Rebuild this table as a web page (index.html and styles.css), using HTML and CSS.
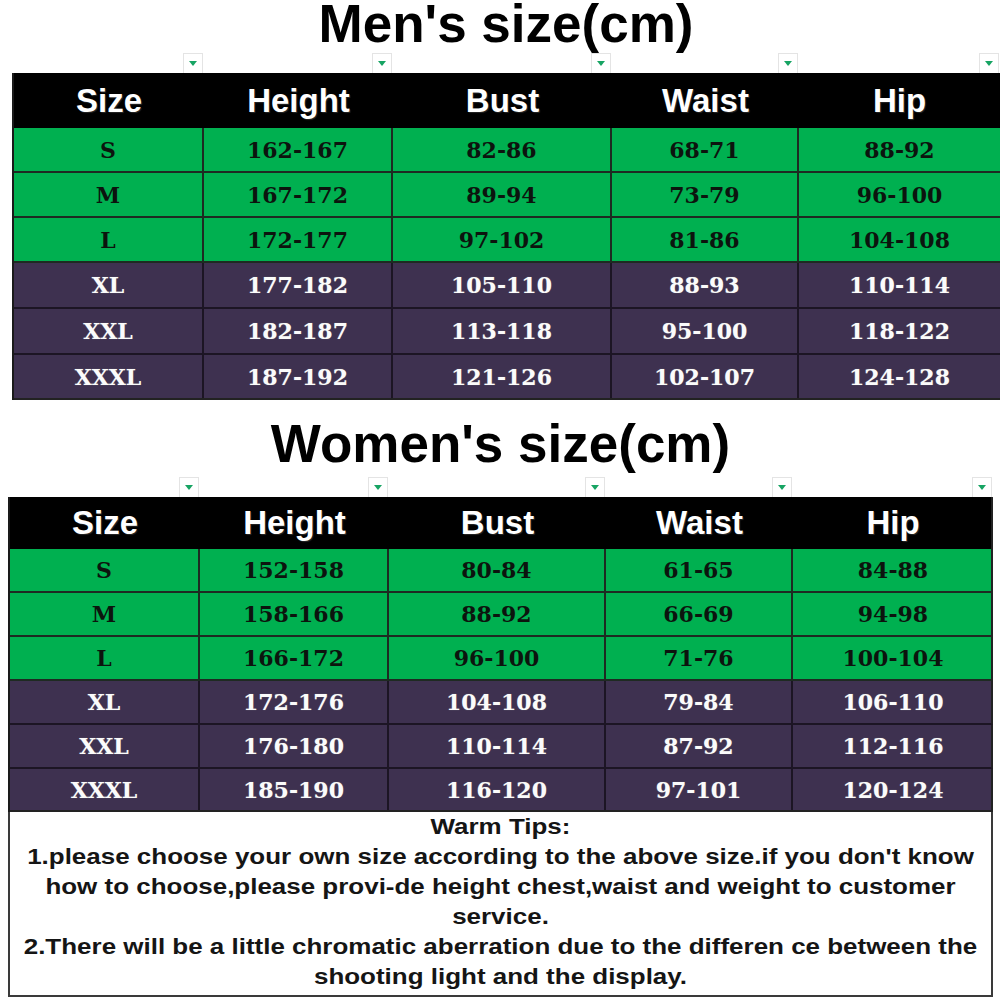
FILE: index.html
```html
<!DOCTYPE html>
<html>
<head>
<meta charset="utf-8">
<link rel="stylesheet" href="styles.css">
</head>
<body>
<div class="page">
  <section class="chart men">
    <h1 class="title">Men's size(cm)</h1>
    <div class="markers">
      <div class="mk"><span class="drop"></span></div>
      <div class="mk"><span class="drop"></span></div>
      <div class="mk"><span class="drop"></span></div>
      <div class="mk"><span class="drop"></span></div>
      <div class="mk"><span class="drop"></span></div>
    </div>
    <div class="table">
      <div class="row head"><div>Size</div><div>Height</div><div>Bust</div><div>Waist</div><div>Hip</div></div>
      <div class="row green"><div>S</div><div>162-167</div><div>82-86</div><div>68-71</div><div>88-92</div></div>
      <div class="row green"><div>M</div><div>167-172</div><div>89-94</div><div>73-79</div><div>96-100</div></div>
      <div class="row green"><div>L</div><div>172-177</div><div>97-102</div><div>81-86</div><div>104-108</div></div>
      <div class="row purple"><div>XL</div><div>177-182</div><div>105-110</div><div>88-93</div><div>110-114</div></div>
      <div class="row purple"><div>XXL</div><div>182-187</div><div>113-118</div><div>95-100</div><div>118-122</div></div>
      <div class="row purple last"><div>XXXL</div><div>187-192</div><div>121-126</div><div>102-107</div><div>124-128</div></div>
    </div>
  </section>

  <section class="chart women">
    <h1 class="title">Women's size(cm)</h1>
    <div class="markers">
      <div class="mk"><span class="drop"></span></div>
      <div class="mk"><span class="drop"></span></div>
      <div class="mk"><span class="drop"></span></div>
      <div class="mk"><span class="drop"></span></div>
      <div class="mk"><span class="drop"></span></div>
    </div>
    <div class="table">
      <div class="row head"><div>Size</div><div>Height</div><div>Bust</div><div>Waist</div><div>Hip</div></div>
      <div class="row green"><div>S</div><div>152-158</div><div>80-84</div><div>61-65</div><div>84-88</div></div>
      <div class="row green"><div>M</div><div>158-166</div><div>88-92</div><div>66-69</div><div>94-98</div></div>
      <div class="row green"><div>L</div><div>166-172</div><div>96-100</div><div>71-76</div><div>100-104</div></div>
      <div class="row purple"><div>XL</div><div>172-176</div><div>104-108</div><div>79-84</div><div>106-110</div></div>
      <div class="row purple"><div>XXL</div><div>176-180</div><div>110-114</div><div>87-92</div><div>112-116</div></div>
      <div class="row purple last"><div>XXXL</div><div>185-190</div><div>116-120</div><div>97-101</div><div>120-124</div></div>
    </div>
    <div class="tips">
      <p>Warm Tips:</p>
      <p>1.please choose your own size according to the above size.if you don't know</p>
      <p>how to choose,please provi-de height chest,waist and weight to customer</p>
      <p>service.</p>
      <p>2.There will be a little chromatic aberration due to the differen ce between the</p>
      <p>shooting light and the display.</p>
    </div>
  </section>
</div>
</body>
</html>
```

FILE: styles.css
```css
* { box-sizing: border-box; }
html, body { margin: 0; padding: 0; background: #fff; }
.page { width: 1000px; height: 1000px; overflow: hidden; font-family: "Liberation Sans", Arial, sans-serif; }

.chart { display: flex; flex-direction: column; }
.men { margin-left: 12px; width: 988px; }
.women { margin-left: 8px; width: 985px; margin-top: 19px; }

.title {
  margin: 0;
  font-family: "Liberation Sans", Arial, sans-serif;
  font-weight: bold;
  font-size: 53px;
  line-height: 48px;
  height: 48px;
  text-align: center;
  color: #000;
}
.women .title { line-height: 50px; height: 50px; }

.markers {
  display: grid;
  grid-template-columns: 192px 189px 219px 187px 201px;
  height: 25px;
  align-items: end;
}
.women .markers { grid-template-columns: 192px 189px 217px 187px 200px; height: 28px; }
.mk { display: flex; justify-content: flex-end; padding-right: 1px; }
.drop {
  width: 20px;
  height: 20px;
  border: 1px solid #e4e4e4;
  border-bottom: none;
  background: #fff;
  display: flex;
  align-items: center;
  justify-content: center;
}
.drop::after {
  content: "";
  width: 0;
  height: 0;
  border-left: 4px solid transparent;
  border-right: 4px solid transparent;
  border-top: 5px solid #17a463;
}

.table { display: flex; flex-direction: column; border-left: 2px solid #1a1a1a; }
.row {
  display: grid;
  grid-template-columns: 190px 189px 219px 187px 201px;
  height: 45px;
  border-bottom: 2px solid #1e2a22;
}
.men .purple { height: 46px; }
.men .last { height: 45px; }
.women .row { grid-template-columns: 190px 189px 217px 187px 200px; height: 44px; border-right: 2px solid #222; }
.women .last { height: 43px; }
.row > div {
  display: flex;
  align-items: center;
  justify-content: center;
  border-right: 2px solid #1e2a22;
  font-family: "DejaVu Serif", "Liberation Serif", serif;
  font-weight: bold;
  font-size: 22px;
}
.row > div:last-child { border-right: none; }

.men .head { background: #000; height: 55px; border-bottom: none; }
.women .head { background: #000; height: 52px; border-bottom: none; }
.head > div {
  border-right: none;
  font-family: "Liberation Sans", Arial, sans-serif;
  font-size: 33px;
  color: #fff;
  text-shadow: 0 0 2px #000, 1px 1px 1px #333;
}
.green { background: #00b050; }
.green > div { color: #0c140e; }
.purple { background: #3e3150; border-bottom-color: #1c1524; }
.purple > div { color: #fbfbfb; border-right-color: #1c1524; text-shadow: 0 0 1px #888; }
.row.last { border-bottom-color: #222; }

.tips {
  height: 185px;
  border: 2px solid #3a3a3a;
  border-top: none;
  text-align: center;
  font-family: "Liberation Sans", Arial, sans-serif;
  font-weight: bold;
  font-size: 22px;
  line-height: 30px;
  color: #151515;
}
.tips p { margin: 0; white-space: nowrap; transform: scaleX(1.18); transform-origin: center; }
```
